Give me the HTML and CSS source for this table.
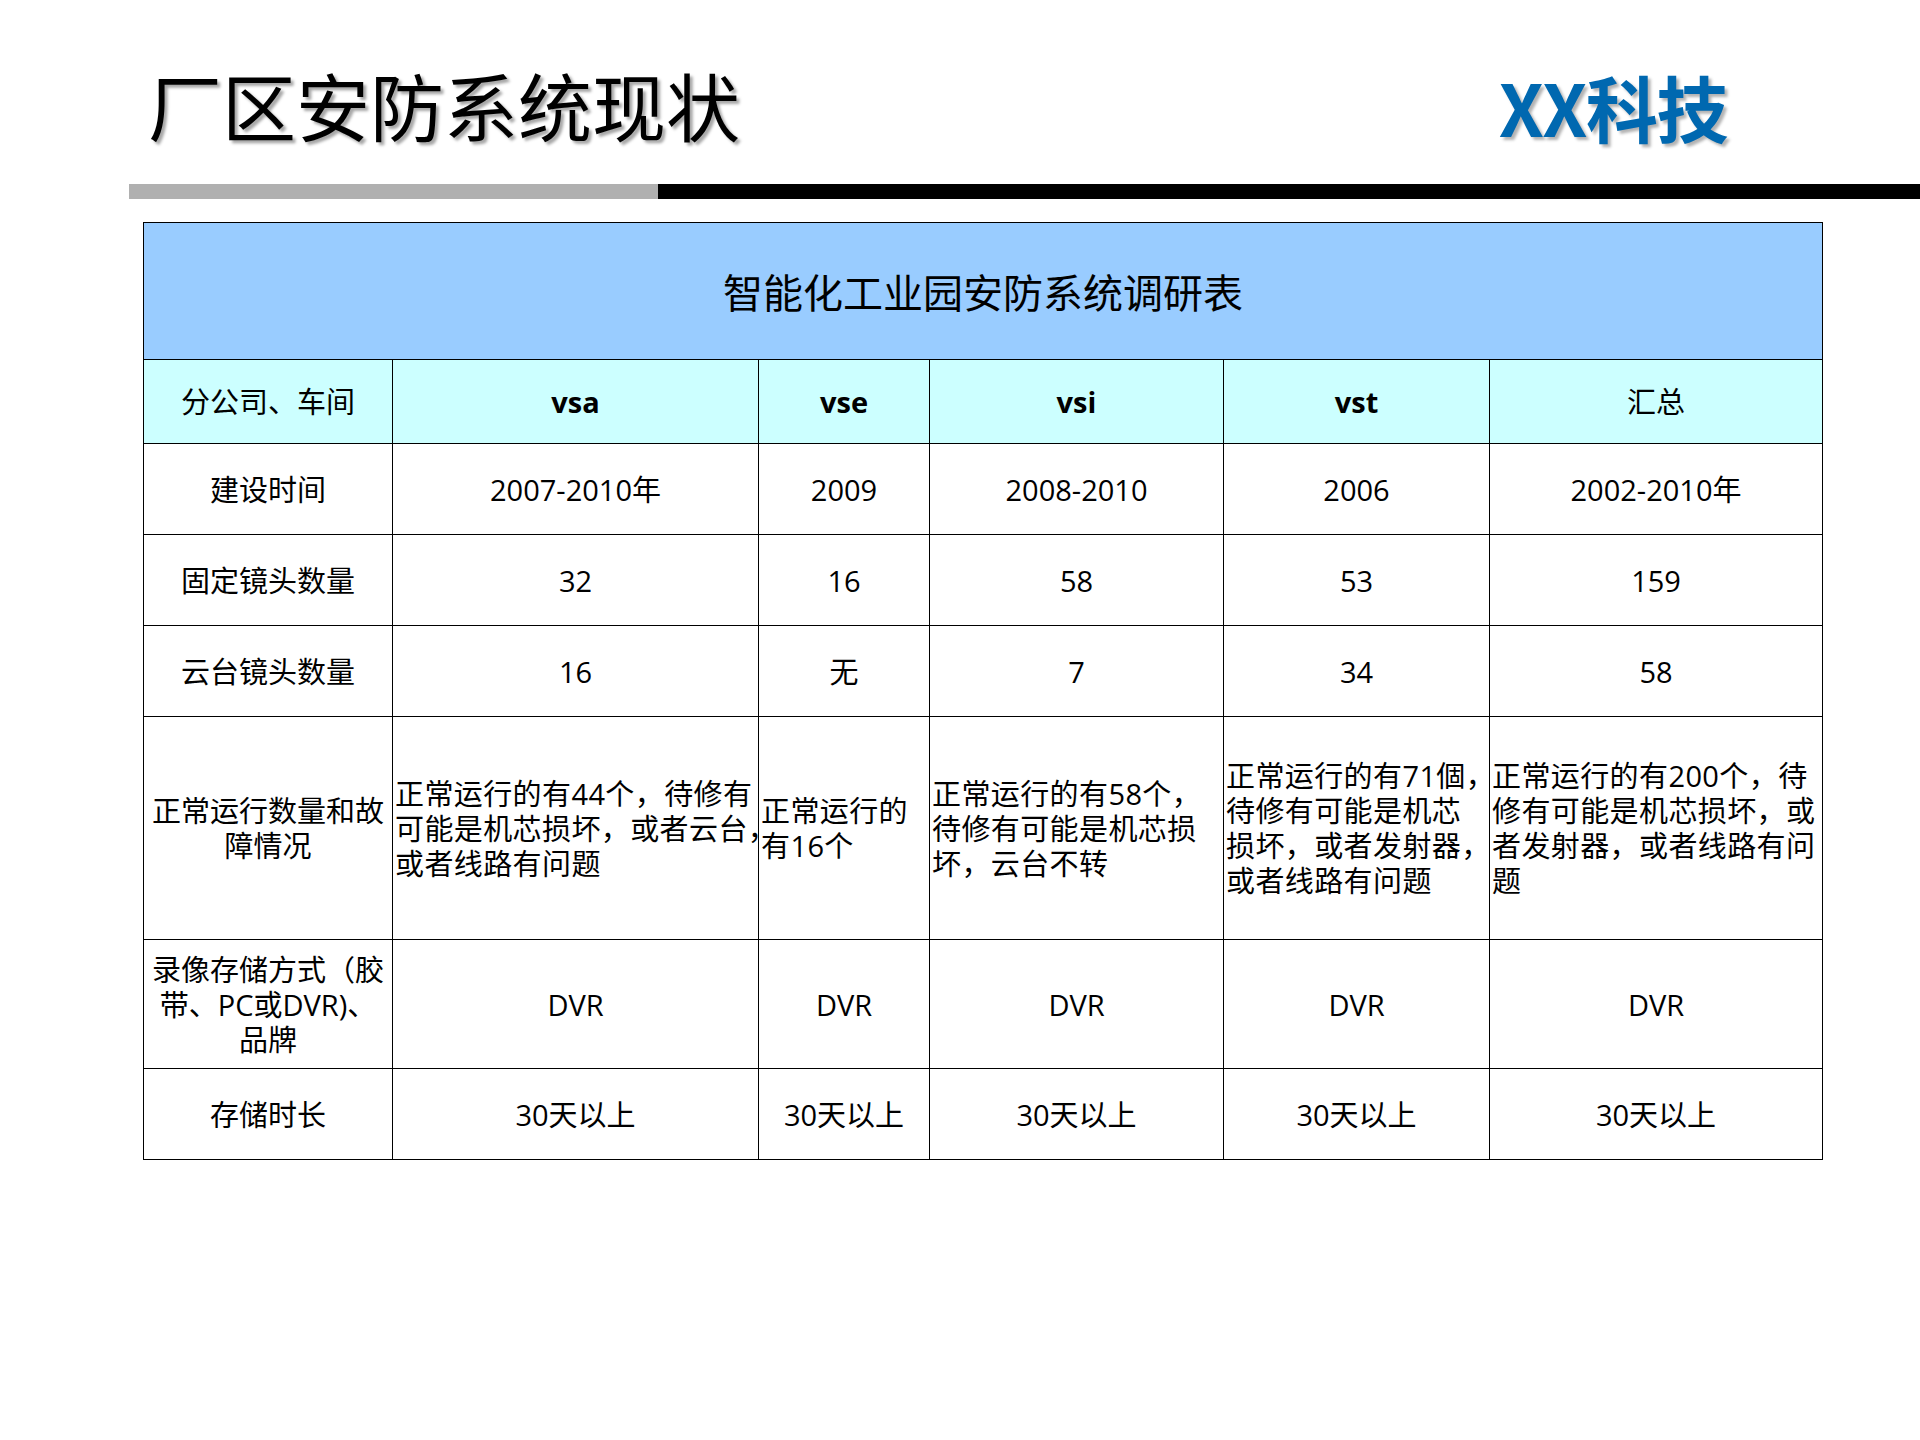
FILE: index.html
```html
<!DOCTYPE html>
<html lang="zh-CN">
<head>
<meta charset="utf-8">
<title>厂区安防系统现状</title>
<link rel="stylesheet" href="styles.css">
</head>
<body>
<div class="slide">
  <header class="top">
    <h1 class="title">厂区安防系统现状</h1>
    <div class="logo">XX科技</div>
  </header>
  <div class="rule"><div class="rule-gray"></div><div class="rule-black"></div></div>
  <table class="survey">
    <colgroup>
      <col class="c1"><col class="c2"><col class="c3"><col class="c4"><col class="c5"><col class="c6">
    </colgroup>
    <tr class="caption-row"><td colspan="6">智能化工业园安防系统调研表</td></tr>
    <tr class="head-row">
      <td>分公司、车间</td>
      <td class="b">vsa</td>
      <td class="b">vse</td>
      <td class="b">vsi</td>
      <td class="b">vst</td>
      <td>汇总</td>
    </tr>
    <tr class="row">
      <td>建设时间</td><td>2007-2010年</td><td>2009</td><td>2008-2010</td><td>2006</td><td>2002-2010年</td>
    </tr>
    <tr class="row">
      <td>固定镜头数量</td><td>32</td><td>16</td><td>58</td><td>53</td><td>159</td>
    </tr>
    <tr class="row">
      <td>云台镜头数量</td><td>16</td><td>无</td><td>7</td><td>34</td><td>58</td>
    </tr>
    <tr class="row tall">
      <td>正常运行数量和故<br>障情况</td>
      <td class="l">正常运行的有44个，待修有<br>可能是机芯损坏，或者云台，<br>或者线路有问题</td>
      <td class="l">正常运行的<br>有16个</td>
      <td class="l">正常运行的有58个，<br>待修有可能是机芯损<br>坏，云台不转</td>
      <td class="l">正常运行的有71個，<br>待修有可能是机芯<br>损坏，或者发射器，<br>或者线路有问题</td>
      <td class="l">正常运行的有200个，待<br>修有可能是机芯损坏，或<br>者发射器，或者线路有问<br>题</td>
    </tr>
    <tr class="row mid">
      <td>录像存储方式（胶<br>带、PC或DVR)、<br>品牌</td>
      <td>DVR</td><td>DVR</td><td>DVR</td><td>DVR</td><td>DVR</td>
    </tr>
    <tr class="row">
      <td>存储时长</td><td>30天以上</td><td>30天以上</td><td>30天以上</td><td>30天以上</td><td>30天以上</td>
    </tr>
  </table>
</div>
</body>
</html>
```

FILE: styles.css
```css
html, body {
  margin: 0;
  padding: 0;
  background: #ffffff;
}

.slide {
  width: 1920px;
  height: 1440px;
  font-family: "Open Sans", "Noto Sans CJK SC", sans-serif;
  color: #000000;
}

.top {
  display: flex;
  justify-content: space-between;
  align-items: flex-start;
  padding: 59px 193px 0 148px;
  height: 118px;
  box-sizing: border-box;
}

.title {
  margin: 0;
  font-family: "Noto Sans CJK SC", sans-serif;
  font-weight: 400;
  font-size: 74px;
  line-height: 90px;
  letter-spacing: 0;
  text-shadow: 3px 3px 3px rgba(0, 0, 0, 0.35);
}

.logo {
  font-family: "Noto Sans CJK SC", sans-serif;
  font-weight: 700;
  font-size: 72px;
  line-height: 90px;
  margin-top: 2px;
  color: #0068b0;
  letter-spacing: -1.5px;
  text-shadow: 3px 3px 3px rgba(0, 0, 0, 0.3);
}

.rule {
  display: flex;
  margin-top: 66px;
  height: 15px;
}

.rule-gray {
  margin-left: 129px;
  width: 529px;
  background: #b0b0b0;
}

.rule-black {
  flex: 1;
  background: #000000;
}

.survey {
  margin: 23px 0 0 143px;
  width: 1679px;
  border-collapse: collapse;
  table-layout: fixed;
  font-size: 29px;
  line-height: 35px;
}

.c1 { width: 249px; }
.c2 { width: 366px; }
.c3 { width: 171px; }
.c4 { width: 294px; }
.c5 { width: 266px; }
.c6 { width: 333px; }

.survey td {
  border: 1.3px solid #000000;
  text-align: center;
  vertical-align: middle;
  padding: 0 2px;
  white-space: nowrap;
}

.caption-row td {
  background: #99ccff;
  height: 136px;
  font-family: "Noto Sans CJK SC", sans-serif;
  font-size: 40px;
  line-height: 50px;
}

.head-row td {
  background: #ccffff;
  height: 83px;
}

.head-row .b {
  font-weight: 700;
}

.row td {
  height: 90px;
}

.row.tall td {
  height: 222px;
}

.row.mid td {
  height: 128px;
}

.survey td.l {
  text-align: left;
  letter-spacing: 0.4px;
}
```
